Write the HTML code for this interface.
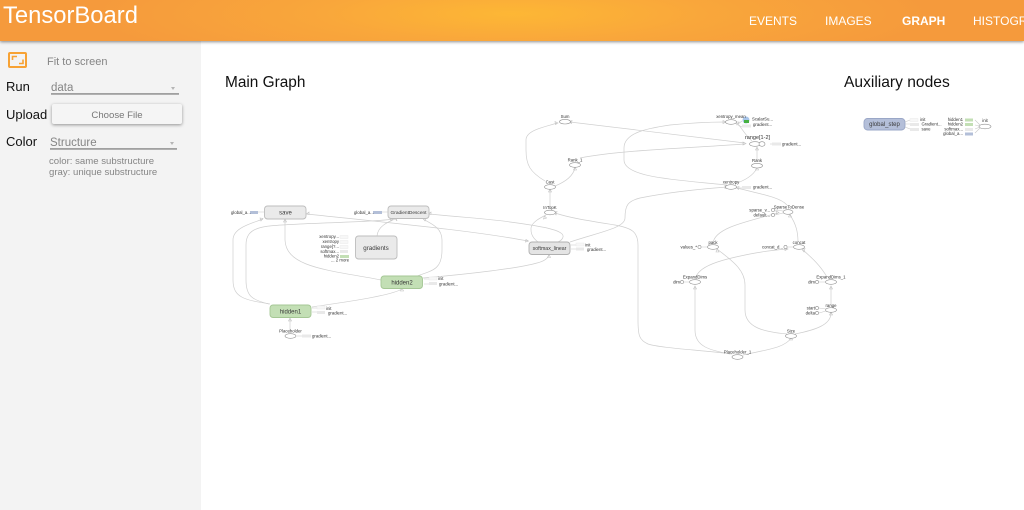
<!DOCTYPE html>
<html><head><meta charset="utf-8"><title>TensorBoard</title>
<style>
html,body{margin:0;padding:0;width:1024px;height:510px;overflow:hidden;background:#fff;font-family:"Liberation Sans",sans-serif}
#hd{position:absolute;left:0;top:0;width:1024px;height:41px;background:radial-gradient(ellipse 420px 60px at 512px 14px,#fdb735 0%,#f9a73b 45%,#f59a3c 100%);box-shadow:0 1px 3px rgba(0,0,0,.45);z-index:3}
#hd .t{position:absolute;left:3px;top:1px;font-size:23.8px;line-height:30px;color:#fff}
#hd .n{position:absolute;top:13.500px;font-size:12px;line-height:15px;color:#fff}
#sb{position:absolute;left:0;top:41px;width:201px;height:469px;background:#f3f3f3}
.a{position:absolute;white-space:nowrap}
.l{font-size:14px;line-height:16px;color:#111}
.g{color:#858585}
.u{position:absolute;height:1px;background:#a0a0a0;border-bottom:1px solid #b0b0b0}
.tri{position:absolute;width:0;height:0;border-left:2.5px solid transparent;border-right:2.5px solid transparent;border-top:3px solid #b5b5b5}
#btn{position:absolute;left:52px;top:63px;width:130px;height:20px;background:#f5f5f5;border-radius:2px;box-shadow:0 1px 3px rgba(0,0,0,.4);font-size:9.600px;line-height:23px;text-align:center;color:#777}
h2{position:absolute;margin:0;font-weight:normal;font-size:15.400px;line-height:20px;color:#111}
svg{position:absolute;left:0;top:0;filter:blur(.28px)}
svg text{font-family:"Liberation Sans",sans-serif;font-size:4.3px;fill:#333}
.e path{fill:none;stroke:#cfcfcf;stroke-width:.7}
.o ellipse{fill:#fff;stroke:#8f8f8f;stroke-width:.6}
.b{stroke-width:.9}
.m{text-anchor:middle}
.e2 text{font-size:6px;text-anchor:middle;fill:#3a3a3a}
.ar{fill:none;stroke:#c2c2c2;stroke-width:.6}
</style></head><body>
<div id="hd">
<div class="t">TensorBoard</div>
<div class="n" style="left:749px">EVENTS</div>
<div class="n" style="left:825px">IMAGES</div>
<div class="n" style="left:902px;font-weight:bold">GRAPH</div>
<div class="n" style="left:973px">HISTOGRAMS</div>
</div>
<div id="sb">
<div class="a" style="left:8px;top:11px;width:15px;height:12px;border:2px solid #f7a234;border-radius:2px">
<svg width="15" height="12" style="filter:none"><path d="M2.500 6V2.500H7M13 5.500V9.500H9" fill="none" stroke="#f7a234" stroke-width="1.600"/></svg>
</div>
<div class="a g" style="left:47px;top:14px;font-size:11px;line-height:14px">Fit to screen</div>
<div class="a l" style="left:6px;top:38px;font-size:13px">Run</div>
<div class="a g" style="left:51px;top:41px;font-size:11.500px;line-height:13px">data</div>
<div class="tri" style="left:171px;top:46px"></div>
<div class="u" style="left:51px;top:52px;width:128px"></div>
<div class="a l" style="left:6px;top:66px;font-size:13px">Upload</div>
<div id="btn">Choose File</div>
<div class="a l" style="left:6px;top:93px;font-size:13px">Color</div>
<div class="a g" style="left:50px;top:96px;font-size:11.500px;line-height:13px">Structure</div>
<div class="tri" style="left:170px;top:101px"></div>
<div class="u" style="left:50px;top:107px;width:127px"></div>
<div class="a g" style="left:49px;top:115px;font-size:9.600px;line-height:11px">color: same substructure<br>gray: unique substructure</div>
</div>
<h2 style="left:225px;top:73px">Main Graph</h2>
<h2 style="left:844px;top:73px;font-size:15.600px">Auxiliary nodes</h2>

<svg width="1024" height="510" viewBox="0 0 1024 510">
<g class="e">
<path d="M270 304C245 300 233 298 233 280V240C233 228 250 224 263 219"/>
<path d="M269 304C252 300 246 296 246 280V245C246 225 265 226 300 224C340 222 375 222 393 219"/>
<path d="M381 280C330 270 286 268 285 240V220"/>
<path d="M417 276C435 270 442 268 442 250V240C442 228 432 224 423 219"/>
<path d="M377 236C378 226 388 222 395 219"/>
<path d="M307 214C380 222 470 230 528 241"/>
<path d="M429 214C470 218 490 219 510 222C540 226 565 230 563 237C562 241 559 241 558 242"/>
<path d="M538 242C530 236 531 230 531 228C532 222 540 218 546 215"/>
<path d="M423 278C470 274 520 268 537 263C545 261 548 258 549 255"/>
<path d="M312 307C345 302 390 296 402 289"/>
<path d="M290 333V319"/>
<path d="M570 242C600 232 625 228 625 218C625 205 628 201 640 198C670 192 700 189 727 187"/>
<path d="M550 207V190"/>
<path d="M545 181C530 172 526 165 526 150V140C526 130 545 127 557 123"/>
<path d="M555 186C565 182 573 176 575 168"/>
<path d="M580 158C620 150 690 148 745 144"/>
<path d="M570 122L745 143"/>
<path d="M727 185C680 180 624 178 624 160V148C624 132 650 128 670 125C690 123 710 122 725 122"/>
<path d="M752 141C745 135 742 128 737 123"/>
<path d="M757 161V148"/>
<path d="M735 184C745 180 753 176 757 168"/>
<path d="M787 205C780 197 760 194 737 188"/>
<path d="M713 243C715 228 745 222 778 213"/>
<path d="M798 242C798 232 796 224 790 215"/>
<path d="M696 277C700 264 730 258 750 254C765 251 775 250 787 249"/>
<path d="M827 277C820 265 812 258 803 250"/>
<path d="M831 306V287"/>
<path d="M795 334C815 330 831 325 831 313"/>
<path d="M787 334C765 332 745 328 745 310V285C745 268 728 258 717 249"/>
<path d="M743 355C765 350 785 348 791 338"/>
<path d="M730 354C710 350 695 347 695 330V287"/>
<path d="M732 354C700 350 660 348 648 344C639 340 638 335 638 320V245C638 232 632 228 615 225C590 221 570 218 555 213"/>
</g>
<g class="ar">
<path d="M261 221l2-2.500-3-.5zM391 221l2-2.500-3-.5zM283.500 222l1.500-3 1.500 3zM425 221l-2-2.500 3-.5zM397 221l-2-2.500 1 -1zM309 214.500l-2.500-.5 2.500-2zM431 214.500l-2.500-.5 2.500-2zM526 239.500l2.500 1.500-3 1zM547.500 257.500l1.500-3 1.500 3zM400.500 291l1.500-3 1.500 3zM288.500 321l1.500-3 1.500 3zM548.500 192l1.500-3 1.500 3zM555 121.500l3 1.500-2.500 1.500zM573.500 170l1.500-3 1.500 3zM572 120.500l-3 1.500 2.500 1.500zM743 142l3 1.500-3 1.500zM723 120.500l3 1.500-3 1.500zM739 122l-3 0 1 3zM755.500 150l1.500-3 1.500 3zM755.500 170l1.500-3 1.500 3zM739 186.500l-3 1 2.500 2zM776 211l3 1.500-2.500 1.500zM788.500 217l1.500-3 1.500 3zM785 247.500l3 1.500-3 1.500zM805 248.500l-3 1 2 2.500zM829.500 289l1.500-3 1.500 3zM829.500 315l1.500-3 1.500 3zM716 252l1-3 2 3zM789.500 340l1.500-3 1.500 3zM693.500 289l1.500-3 1.500 3zM557 211.500l-3 1 2 2.500zM546.500 218l-2 -2 -1 3zM725 185l3 2-3 1.500z"/>
</g>

<!-- main boxes -->
<rect class="b" x="264.500" y="206" width="41.500" height="13" rx="3" fill="#eaeaea" stroke="#bdbdbd"/>
<rect class="b" x="388" y="206" width="41" height="12.500" rx="3" fill="#eaeaea" stroke="#bdbdbd"/>
<rect class="b" x="355.500" y="236" width="41.500" height="23" rx="3" fill="#eaeaea" stroke="#bdbdbd"/>
<rect class="b" x="381" y="276" width="41.500" height="12.500" rx="3" fill="#c3dfb5" stroke="#a5c795"/>
<rect class="b" x="270" y="305" width="41" height="12.500" rx="3" fill="#c3dfb5" stroke="#a5c795"/>
<rect class="b" x="529" y="242" width="41" height="12.500" rx="3" fill="#e4e4e4" stroke="#b0b0b0"/>
<rect class="b" x="864" y="118.500" width="41" height="11.500" rx="3.500" fill="#b4bfd9" stroke="#9aa7c7"/>
<g class="e2">
<text x="285.500" y="214.500">save</text>
<text x="408.500" y="214" style="font-size:4.800px">GradientDescent</text>
<text x="376" y="250" style="font-size:6.200px">gradients</text>
<text x="402" y="284.500">hidden2</text>
<text x="290.500" y="313.500">hidden1</text>
<text x="549.500" y="250" style="font-size:5.200px">softmax_linear</text>
<text x="884.500" y="126">global_step</text>
</g>

<!-- ellipses -->
<g class="o">
<ellipse cx="290.500" cy="336" rx="5.500" ry="2.300"/>
<ellipse cx="565" cy="121.700" rx="5.500" ry="2.300"/>
<ellipse cx="575" cy="165" rx="5.500" ry="2.300"/>
<ellipse cx="550" cy="187" rx="5.500" ry="2.300"/>
<ellipse cx="550" cy="212.500" rx="5.500" ry="2.300"/>
<ellipse cx="731" cy="122" rx="5.500" ry="2.300"/>
<ellipse cx="731" cy="187" rx="5.500" ry="2.300"/>
<ellipse cx="755" cy="144" rx="5.500" ry="2.300"/>
<ellipse cx="762" cy="144" rx="3" ry="2.300"/>
<ellipse cx="757" cy="165.700" rx="5.500" ry="2.300"/>
<ellipse cx="788" cy="212" rx="5" ry="2.300"/>
<ellipse cx="713" cy="247" rx="5.500" ry="2.300"/>
<ellipse cx="799" cy="247" rx="5.500" ry="2.300"/>
<ellipse cx="695" cy="282" rx="5.500" ry="2.300"/>
<ellipse cx="831" cy="282" rx="5.500" ry="2.300"/>
<ellipse cx="831" cy="310" rx="5.500" ry="2.300"/>
<ellipse cx="791" cy="336" rx="5.500" ry="2.300"/>
<ellipse cx="737.500" cy="357" rx="5.500" ry="2.300"/>
<ellipse cx="985" cy="126.500" rx="6" ry="2.300"/>
<!-- constant dots -->
<ellipse cx="682" cy="282" rx="1.600" ry="1.600"/>
<ellipse cx="699.500" cy="247" rx="1.600" ry="1.600"/>
<ellipse cx="785.500" cy="247" rx="1.600" ry="1.600"/>
<ellipse cx="773" cy="210" rx="1.600" ry="1.600"/>
<ellipse cx="773" cy="215" rx="1.600" ry="1.600"/>
<ellipse cx="817" cy="282" rx="1.600" ry="1.600"/>
<ellipse cx="817" cy="308" rx="1.600" ry="1.600"/>
<ellipse cx="817" cy="313" rx="1.600" ry="1.600"/>
</g>
<g fill="none" stroke="#c8c8c8" stroke-width=".6">
<path d="M684 282h6M701 247h6M787 247h6M775 210l8 1M775 215l8-2M819 282h6M819 308l7 1M819 313l7-2"/>
<path d="M312 308h5M312 312h5M424 279h5M424 284h5M571 245h5M571 249h5M297 336h5M770 144h6M737 188h5M905 122l5-2M905 124h5M905 127l5 2M975 120l5 5M975 125l5 1M975 129l5-2M975 133l5-5M258 212h6M382 212h6M738 124l4 -3M738 125l4 2"/>
</g>

<!-- aux chips -->
<g>
<rect x="250" y="211" width="8" height="3" fill="#b3bfd8"/>
<rect x="373" y="211" width="9" height="3" fill="#b3bfd8"/>
<rect x="317" y="306" width="8" height="3" fill="#f7f7f7" stroke="#e6e6e6" stroke-width=".4"/>
<rect x="317" y="311" width="8" height="3" fill="#e9e9e9"/>
<rect x="429" y="277" width="8" height="3" fill="#f7f7f7" stroke="#e6e6e6" stroke-width=".4"/>
<rect x="429" y="282" width="8" height="3" fill="#e9e9e9"/>
<rect x="576" y="243" width="8" height="3" fill="#f7f7f7" stroke="#e6e6e6" stroke-width=".4"/>
<rect x="576" y="247.500" width="8" height="3" fill="#e9e9e9"/>
<rect x="302" y="334.500" width="9" height="3" fill="#e9e9e9"/>
<rect x="772" y="142.500" width="9" height="3" fill="#e9e9e9"/>
<rect x="742" y="186" width="9" height="3" fill="#e9e9e9"/>
<rect x="742" y="124.500" width="9" height="3" fill="#e9e9e9"/>
<rect x="340" y="235.500" width="8" height="3" fill="#f7f7f7" stroke="#e6e6e6" stroke-width=".4"/>
<rect x="340" y="240.500" width="8" height="3" fill="#f7f7f7" stroke="#e6e6e6" stroke-width=".4"/>
<rect x="340" y="245.500" width="8" height="3" fill="#f7f7f7" stroke="#e6e6e6" stroke-width=".4"/>
<rect x="340" y="250" width="8" height="3" fill="#e9e9e9"/>
<rect x="340" y="255" width="9" height="3" fill="#c3dfb5"/>
<rect x="910" y="118.500" width="8" height="3" fill="#f7f7f7" stroke="#e6e6e6" stroke-width=".4"/>
<rect x="910" y="123" width="9" height="3" fill="#e9e9e9"/>
<rect x="910" y="128" width="9" height="3" fill="#e9e9e9"/>
<rect x="965" y="118.500" width="8" height="3" fill="#c3dfb5"/>
<rect x="965" y="123" width="8" height="3" fill="#c3dfb5"/>
<rect x="965" y="128" width="8" height="3" fill="#e9e9e9"/>
<rect x="965" y="132.500" width="8" height="3" fill="#b3bfd8"/>
</g>
<!-- summary icon -->
<ellipse cx="746" cy="120" rx="3.500" ry="3.500" fill="#a9c6ea"/>
<rect x="744" y="120" width="5" height="3" fill="#45b040"/>

<!-- labels -->
<g>
<text class="m" x="565" y="118">Sum</text>
<text class="m" x="575" y="161.500">Rank_1</text>
<text class="m" x="550" y="183.500">Cast</text>
<text class="m" x="550" y="209">InTopK</text>
<text class="m" x="731" y="118">xentropy_mean</text>
<text class="m" x="731" y="183.500">xentropy</text>
<text class="m" x="757" y="162">Rank</text>
<text class="m" x="789" y="208.500">SparseToDense</text>
<text class="m" x="713" y="244">pack</text>
<text class="m" x="799" y="244">concat</text>
<text class="m" x="695" y="278.500">ExpandDims</text>
<text class="m" x="831" y="278.500">ExpandDims_1</text>
<text class="m" x="831" y="307">range</text>
<text class="m" x="791" y="332.500">Size</text>
<text class="m" x="737.500" y="353.500">Placeholder_1</text>
<text class="m" x="290.500" y="332.500">Placeholder</text>
<text class="m" x="985" y="122">init</text>
<text class="m" x="757.500" y="139" style="font-size:5.500px">range[1-2]</text>
<text x="326" y="310">init</text><text x="328" y="314.500">gradient...</text>
<text x="438" y="280">init</text><text x="439" y="285.500">gradient...</text>
<text x="585" y="246.500">init</text><text x="587" y="251">gradient...</text>
<text x="312" y="337.500">gradient...</text>
<text x="782" y="145.500">gradient...</text>
<text x="753" y="188.500">gradient...</text>
<text x="753" y="126">gradient...</text>
<text x="752" y="120.500">ScalarSu...</text>
<text x="231" y="214">global_a...</text>
<text x="354" y="214">global_a...</text>
<text x="339" y="238.200" style="text-anchor:end">xentropy...</text>
<text x="339" y="243.200" style="text-anchor:end">xentropy</text>
<text x="339" y="248.200" style="text-anchor:end">range[?...</text>
<text x="339" y="253" style="text-anchor:end">softmax...</text>
<text x="339" y="257.500" style="text-anchor:end">hidden2</text>
<text x="331" y="261.500">... 2 more</text>
<text x="697" y="248.500" style="text-anchor:end">values_*</text>
<text x="770" y="211.500" style="text-anchor:end">sparse_v...</text>
<text x="770" y="216.500" style="text-anchor:end">default...</text>
<text x="783" y="248.500" style="text-anchor:end">concat_d...</text>
<text x="680" y="283.500" style="text-anchor:end">dim</text>
<text x="815" y="283.500" style="text-anchor:end">dim</text>
<text x="815" y="309.500" style="text-anchor:end">start</text>
<text x="815" y="314.500" style="text-anchor:end">delta</text>
<text x="920" y="121">init</text><text x="921.500" y="125.500">Gradient...</text><text x="921.500" y="130.500">save</text>
<text x="963" y="120.800" style="text-anchor:end">hidden1</text>
<text x="963" y="125.500" style="text-anchor:end">hidden2</text>
<text x="963" y="130.500" style="text-anchor:end">softmax...</text>
<text x="963" y="135" style="text-anchor:end">global_a...</text>
</g>
</svg>
</body></html>
